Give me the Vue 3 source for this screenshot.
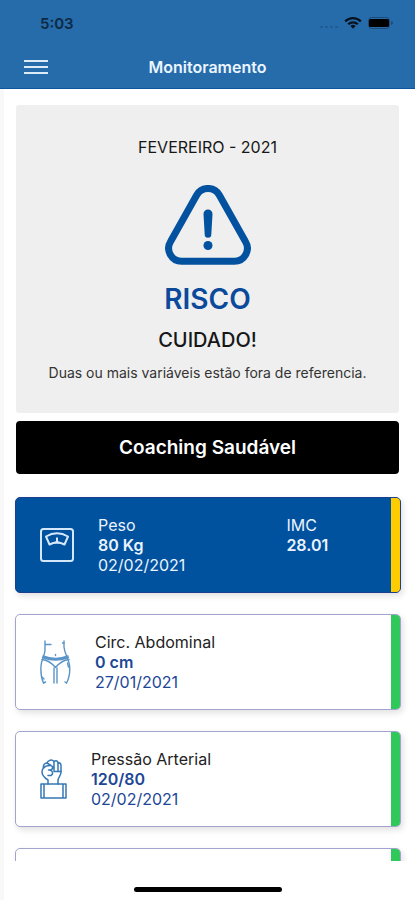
<script setup>
const cards = [
  { icon: 'scale', width: 34, label: 'Peso', value: '80 Kg', date: '02/02/2021', extra: { label: 'IMC', value: '28.01' }, active: true, level: 'warn' },
  { icon: 'waist', width: 31, label: 'Circ. Abdominal', value: '0 cm', date: '27/01/2021', level: 'ok' },
  { icon: 'fist', width: 27, label: 'Pressão Arterial', value: '120/80', date: '02/02/2021', level: 'ok' },
  { level: 'ok' },
]
</script>

<template>
  <div class="screen">
    <header class="header">
      <div class="status">
        <span class="time">5:03</span>
        <svg class="status-icons" width="76" height="16" viewBox="0 0 76 16" aria-hidden="true">
          <g fill="#1f5a92">
            <rect x="1" y="11" width="3" height="2" rx="1" />
            <rect x="6" y="11" width="3" height="2" rx="1" />
            <rect x="11" y="11" width="3" height="2" rx="1" />
            <rect x="16" y="11" width="3" height="2" rx="1" />
          </g>
          <g fill="none" stroke="#08131f" stroke-width="2.2">
            <path d="M26.2 6.4a11 11 0 0 1 15.6 0" />
            <path d="M29.2 9.3a6.8 6.8 0 0 1 9.6 0" />
          </g>
          <path d="M34 13.8l-2.6-2.7a3.7 3.7 0 0 1 5.2 0z" fill="#08131f" />
          <rect x="49.5" y="2.5" width="21" height="11" rx="3" fill="none" stroke="#1b4c7c" />
          <rect x="50" y="4" width="20" height="8" rx="1.5" fill="#000" />
          <path d="M72 6q2 .5 2 2t-2 2z" fill="#1b4c7c" />
        </svg>
      </div>
      <nav class="nav">
        <button class="menu" type="button" aria-label="Menu">
          <span></span><span></span><span></span>
        </button>
        <h1>Monitoramento</h1>
      </nav>
    </header>

    <main class="content">
      <section class="summary">
        <p class="month">FEVEREIRO - 2021</p>
        <svg class="alert" width="86" height="80" viewBox="0 0 86 80" aria-hidden="true">
          <path d="M31.6 10.2a13 13 0 0 1 22.8 0L80.4 56.5a13 13 0 0 1-11.3 19.8H16.9A13 13 0 0 1 5.6 56.5z" fill="none" stroke="#0352a0" stroke-width="7" />
          <path d="M38.5 29a4.5 4.5 0 0 1 9 0l-1.2 20.5a3.3 3.3 0 0 1-6.6 0z" fill="#0352a0" />
          <circle cx="43" cy="60.5" r="4.5" fill="#0352a0" />
        </svg>
        <h2>RISCO</h2>
        <p class="caution">CUIDADO!</p>
        <p class="detail">Duas ou mais variáveis estão fora de referencia.</p>
      </section>

      <button class="coaching" type="button">Coaching Saudável</button>

      <div class="list">
        <article v-for="(card, i) in cards" :key="i" class="card" :class="{ active: card.active }">
          <div class="body">
            <svg v-if="card.icon === 'scale'" :width="card.width" height="34" viewBox="0 0 34 34" fill="none" stroke="#d5e8fb" stroke-width="2" stroke-linejoin="round" aria-hidden="true">
              <rect x="1" y="1" width="32" height="32" rx="2.5" />
              <path d="M6 8.5Q17 2 28 8.5L24.5 16.5Q17 12.500 9.5 16.5z" />
              <path d="M17 9.5v4.5M14.500 14.500h5" />
            </svg>
            <svg v-else-if="card.icon === 'waist'" :width="card.width" height="44" viewBox="0 0 31 44" fill="none" stroke="#5a94c8" stroke-width="1.4" stroke-linecap="round" stroke-linejoin="round" aria-hidden="true">
              <path d="M5 1v9C5 15 1.500 19 1 26c-.4 6 .2 12 2.500 17M5 4.500h6M24 1v6c.5 7 4.500 11 5.500 18 .7 6-.3 13-3 18" />
              <path d="M22.500 3H24M3 16Q15.500 21 28 16M2 19.500Q9 20 15.500 27.500Q22 20 29 19.500M2.500 17.500Q15.500 22.500 28.500 17.500" />
              <path d="M14 28v15M17 28v15M15.500 14.500v1M2 37l2 2M27.500 23l1 4M3.500 43l2-1M26.500 43l-1.500-1" />
            </svg>
            <svg v-else-if="card.icon === 'fist'" :width="card.width" height="40" viewBox="0 0 27 40" fill="none" stroke="#3678b5" stroke-width="1.5" stroke-linecap="round" stroke-linejoin="round" aria-hidden="true">
              <path d="M1 25h25v14H1zM4 25v14M23 25v14" />
              <path d="M8 25v-4C4 18.500 2 16 2 13c0-2 .5-3 1.500-4-.5-3 1-5 3.500-5 1-3 5-4 7-1.500 2-1.500 4-.5 4 1.500 2-.5 3 .5 3 3v6c0 4-3 5.500-3 8.500V25" />
              <path d="M3.500 9C5 7 7 6.500 10 6.500c3.500 0 3.500 4 0 4.500H8.500M10 11c3 1 3.500 4 1 5.500H8M7 4l4 2.500M14 2.500v10h7M18 4v8.500" />
            </svg>
            <div v-if="card.label" class="reading">
              <h3>{{ card.label }}</h3>
              <strong>{{ card.value }}</strong>
              <time>{{ card.date }}</time>
            </div>
            <div v-if="card.extra" class="reading extra">
              <h3>{{ card.extra.label }}</h3>
              <strong>{{ card.extra.value }}</strong>
            </div>
          </div>
          <span class="level" :class="card.level"></span>
        </article>
      </div>
    </main>

    <footer class="home"><span></span></footer>
  </div>
</template>

<style>
body {
  margin: 0;
  background: #fff;
}
</style>

<style scoped>
.screen {
  display: flex;
  flex-direction: column;
  height: 100vh;
  font-family: Inter, "Liberation Sans", sans-serif;
  color: #171717;
}
h1, h2, h3, p {
  margin: 0;
  font-weight: 400;
}
button {
  font-family: inherit;
  border: 0;
  cursor: pointer;
}
.header {
  flex: none;
  background: #266baa;
  border-bottom: 1px solid #0a57a0;
}
.status {
  display: flex;
  align-items: center;
  justify-content: space-between;
  height: 46px;
  padding: 0 20px 0 40px;
}
.time {
  font-size: 15px;
  font-weight: 600;
  color: #0d2a45;
}
.nav {
  display: grid;
  grid-template-columns: 1fr auto 1fr;
  align-items: center;
  height: 42px;
  padding: 0 24px;
}
.nav h1 {
  font-size: 16px;
  font-weight: 600;
  color: #eaf5ff;
}
.menu {
  display: flex;
  flex-direction: column;
  gap: 4px;
  width: 24px;
  padding: 0;
  background: none;
}
.menu span {
  height: 2px;
  background: #dcebf8;
}
.content {
  flex: 1;
  min-height: 0;
  overflow: hidden;
  padding: 16px 14px 0 11px;
  border-left: 4px solid #f8f8f8;
}
.summary {
  display: flex;
  flex-direction: column;
  align-items: center;
  padding: 32px 8px 30px;
  margin: 0 2px 8px 1px;
  background: #efefef;
  border-radius: 3px;
  text-align: center;
}
.month {
  font-size: 16px;
  line-height: 20px;
}
.alert {
  margin: 28px 0 16px;
}
.summary h2 {
  font-size: 28px;
  line-height: 36px;
  font-weight: 600;
  color: #0b4a9b;
}
.caution {
  margin: 11px 0;
  font-size: 20px;
  line-height: 24px;
  font-weight: 500;
}
.detail {
  font-size: 14px;
  line-height: 20px;
  color: #333;
}
.coaching {
  display: block;
  width: calc(100% - 3px);
  height: 53px;
  margin: 0 2px 23px 1px;
  background: #000;
  border-radius: 4px;
  color: #fff;
  font-size: 19px;
  font-weight: 600;
}
.list {
  display: flex;
  flex-direction: column;
  gap: 21px;
}
.card {
  display: flex;
  box-sizing: border-box;
  min-height: 96px;
  overflow: hidden;
  border: 1px solid #a3a3cf;
  border-radius: 5px;
  background: #fff;
  box-shadow: 2px 3px 6px rgba(0, 0, 0, 0.12);
}
.body {
  flex: 1;
  display: flex;
  align-items: center;
  gap: 24px;
  padding: 0 0 0 24px;
}
.body svg {
  flex: none;
}
.reading {
  flex: 11;
  display: flex;
  flex-direction: column;
  font-size: 16px;
  line-height: 20px;
  color: #1d4796;
}
.reading h3 {
  font-size: 16px;
  color: #222;
}
.reading strong {
  font-weight: 600;
}
.extra {
  flex: 7;
  align-self: flex-start;
  margin-top: 17px;
}
.active {
  background: #00519e;
  border-color: #1d3f90;
}
.active .reading,
.active .reading h3 {
  color: #eaf4ff;
}
.level {
  flex: none;
  width: 9px;
}
.warn {
  background: #fc0;
}
.ok {
  background: #30c75b;
}
.home {
  flex: none;
  display: flex;
  justify-content: center;
  padding: 26px 4px 8px 0;
  border-left: 4px solid #f8f8f8;
}
.home span {
  width: 148px;
  height: 5px;
  border-radius: 3px;
  background: #000;
}
</style>
